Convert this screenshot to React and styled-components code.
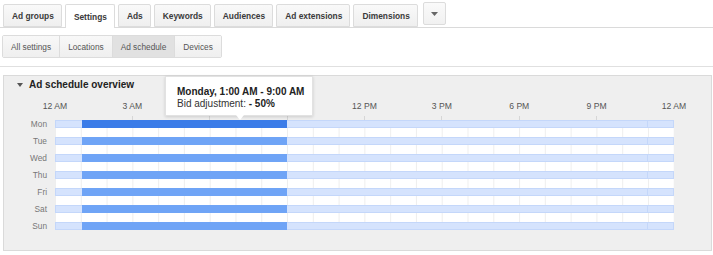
import React from "react";
import styled, { createGlobalStyle } from "styled-components";

const GlobalStyle = createGlobalStyle`
  html, body {
    margin: 0;
    padding: 0;
    background: #fff;
    font-family: "Liberation Sans", Arial, sans-serif;
  }
`;

const tabs = ["Ad groups", "Settings", "Ads", "Keywords", "Audiences", "Ad extensions", "Dimensions"];
const subTabs = ["All settings", "Locations", "Ad schedule", "Devices"];
// 6 AM and 9 AM sit under the tooltip in the screenshot
const hours = ["12 AM", "3 AM", "", "", "12 PM", "3 PM", "6 PM", "9 PM", "12 AM"];
const days = ["Mon", "Tue", "Wed", "Thu", "Fri", "Sat", "Sun"];

const Page = styled.div`
  width: 713px;
  height: 255px;
  overflow: hidden;
`;

const TabBar = styled.div`
  display: flex;
  align-items: flex-end;
  gap: 3px;
  height: 23px;
  padding: 4px 0 0 3px;
  border-bottom: 1px solid #dadada;
`;

const Tab = styled.div`
  height: ${(p) => (p.$active ? "24px" : "23px")};
  margin-bottom: ${(p) => (p.$active ? "-1px" : "0")};
  box-sizing: border-box;
  padding: 0 7px 0 8px;
  display: flex;
  align-items: center;
  border: 1px solid #dcdcdc;
  border-bottom: ${(p) => (p.$active ? "none" : "1px solid #dcdcdc")};
  border-radius: 2px 2px 0 0;
  background: ${(p) => (p.$active ? "#fff" : "linear-gradient(#f9f9f9, #efefef)")};
  color: #3a3a3a;
  font-weight: bold;
  font-size: 8.4px;
  white-space: nowrap;
`;

const MoreButton = styled.div`
  align-self: flex-start;
  margin: -2px 0 0 2px;
  width: 23px;
  height: 23px;
  box-sizing: border-box;
  border: 1px solid #dcdcdc;
  border-radius: 2px;
  background: linear-gradient(#fafafa, #f1f1f1);
  display: flex;
  align-items: center;
  justify-content: center;
  svg {
    display: block;
  }
`;

const SubTabs = styled.div`
  display: inline-flex;
  margin: 7px 0 0 2px;
  height: 23px;
  border: 1px solid #dcdcdc;
  border-radius: 2px;
  box-sizing: border-box;
  overflow: hidden;
`;

const SubTab = styled.div`
  display: flex;
  align-items: center;
  padding: 0 8px;
  font-size: 8.3px;
  color: #555;
  white-space: nowrap;
  background: ${(p) => (p.$active ? "#e1e1e1" : "linear-gradient(#f8f8f8, #efefef)")};
  & + & {
    border-left: 1px solid #dcdcdc;
  }
`;

const Divider = styled.div`
  margin-top: 8px;
  height: 1px;
  background: #e0e0e0;
`;

const Panel = styled.div`
  position: relative;
  margin: 8px 1px 0 3px;
  height: 176px;
  box-sizing: border-box;
  border: 1px solid #dadada;
  background: #efefef;
`;

const Title = styled.div`
  display: flex;
  align-items: center;
  gap: 6px;
  padding: 1px 0 0 13px;
  line-height: 16px;
  font-size: 10px;
  font-weight: bold;
  color: #222;
`;

const Chart = styled.div`
  margin-left: 51px;
  width: 619px;
`;

const Axis = styled.div`
  display: grid;
  grid-template-columns: repeat(9, calc(619px / 8));
  margin: 6px 0 0 calc(-619px / 16);
`;

const AxisLabel = styled.div`
  display: flex;
  flex-direction: column;
  align-items: center;
  font-size: 8.6px;
  line-height: 14px;
  min-height: 14px;
  color: #555;
`;

const Label = styled.span`
  height: 14px;
`;

const Tick = styled.div`
  width: 1px;
  height: 4px;
  margin-top: 3px;
  background: ${(p) => (p.$hidden ? "transparent" : "#d6d6d6")};
`;

const DayRow = styled.div`
  display: grid;
  grid-template-columns: 619px;
  height: 8px;
  position: relative;
`;

const DayLabel = styled.div`
  position: absolute;
  right: 100%;
  top: 0;
  padding-right: 8px;
  font-size: 8.3px;
  line-height: 8px;
  color: #777;
`;

const Bar = styled.div`
  display: grid;
  grid-template-columns: repeat(24, 1fr);
  height: 8px;
  box-sizing: border-box;
  border: 1px solid #c4d7fa;
  background: #d5e3fd;
`;

const Active = styled.div`
  grid-column: ${(p) => p.$from + 1} / ${(p) => p.$to + 1};
  margin: -1px 0;
  background: ${(p) => (p.$hover ? "#3b7ce8" : "#6fa4f6")};
`;

const LastCell = styled.div`
  grid-column: 24 / 25;
  border-left: 1px solid #c4d7fa;
`;

const Gap = styled.div`
  height: 9px;
  background-color: #fff;
  background-image: linear-gradient(to right, #eeeeee 1px, transparent 1px);
  background-size: calc(619px / 24) 100%;
`;

const Tooltip = styled.div`
  position: absolute;
  left: 161px;
  top: 0;
  width: 148px;
  height: 40px;
  box-sizing: border-box;
  padding: 9px 0 0 11px;
  background: #fff;
  border: 1px solid #e2e2e2;
  box-shadow: 0 1px 3px rgba(0, 0, 0, 0.15);
  font-size: 10px;
  line-height: 12px;
  color: #333;
  b {
    color: #222;
  }
  &::after {
    content: "";
    position: absolute;
    left: 70px;
    bottom: -5px;
    border-left: 4px solid transparent;
    border-right: 4px solid transparent;
    border-top: 5px solid #fff;
  }
`;

export default function App() {
  return (
    <Page>
      <GlobalStyle />
      <TabBar>
        {tabs.map((t) => (
          <Tab key={t} $active={t === "Settings"}>
            {t}
          </Tab>
        ))}
        <MoreButton>
          <svg width="7" height="4" viewBox="0 0 7 4">
            <path d="M0 0h7L3.5 4z" fill="#666" />
          </svg>
        </MoreButton>
      </TabBar>
      <SubTabs>
        {subTabs.map((t) => (
          <SubTab key={t} $active={t === "Ad schedule"}>
            {t}
          </SubTab>
        ))}
      </SubTabs>
      <Divider />
      <Panel>
        <Title>
          <svg width="6" height="4" viewBox="0 0 6 4">
            <path d="M0 0h6L3 4z" fill="#555" />
          </svg>
          Ad schedule overview
        </Title>
        <Chart>
          <Axis>
            {hours.map((h, i) => (
              <AxisLabel key={i}>
                <Label>{h}</Label>
                <Tick $hidden={i === 0 || i === hours.length - 1} />
              </AxisLabel>
            ))}
          </Axis>
          {days.map((d, i) => (
            <React.Fragment key={d}>
              <DayRow>
                <DayLabel>{d}</DayLabel>
                <Bar>
                  <Active $from={1} $to={9} $hover={i === 0} />
                  <LastCell />
                </Bar>
              </DayRow>
              {i < days.length - 1 && <Gap />}
            </React.Fragment>
          ))}
        </Chart>
        <Tooltip>
          <b>Monday, 1:00 AM - 9:00 AM</b>
          <div>
            Bid adjustment: <b>- 50%</b>
          </div>
        </Tooltip>
      </Panel>
    </Page>
  );
}
